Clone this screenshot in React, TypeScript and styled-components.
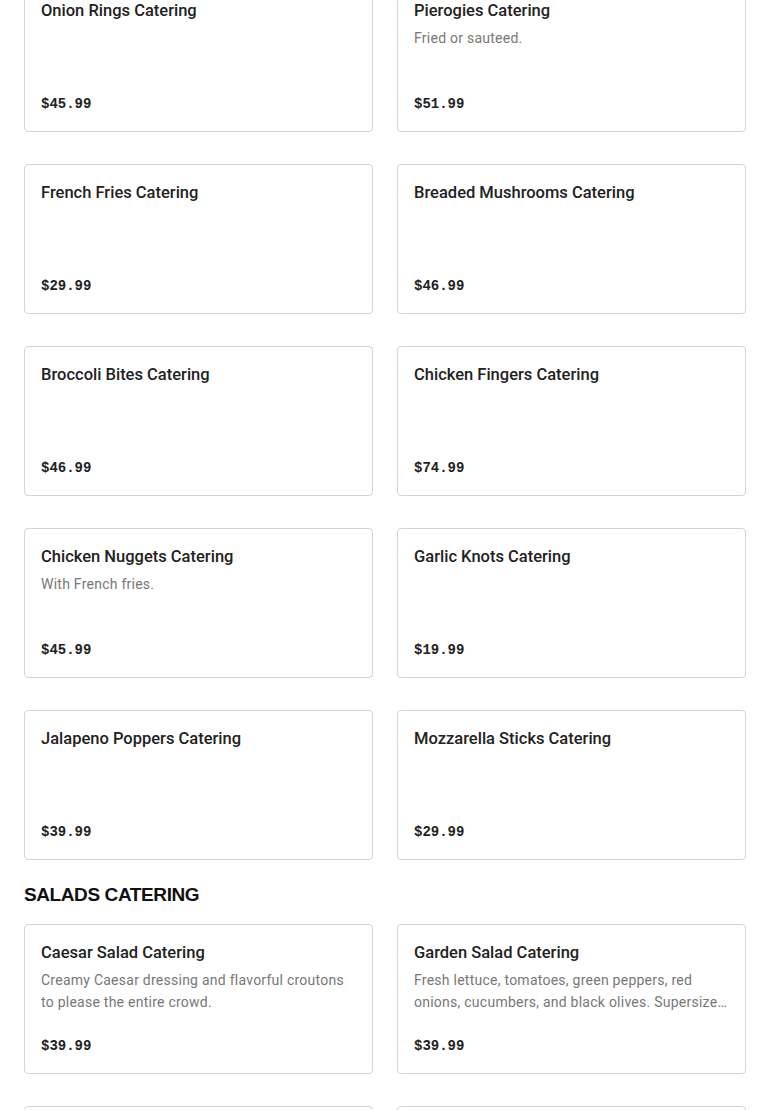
import React from "react";
import styled, { createGlobalStyle } from "styled-components";

const GlobalStyle = createGlobalStyle`
  * {
    box-sizing: border-box;
  }
  body {
    margin: 0;
    background: #fff;
    font-family: Roboto, "Liberation Sans", sans-serif;
    color: #222;
    overflow: hidden;
  }
`;

const Page = styled.div`
  padding: 0 24px;
  margin-top: -18px;
`;

const Grid = styled.div`
  display: grid;
  grid-template-columns: 1fr 1fr;
  column-gap: 24px;
  row-gap: 32px;
`;

const SectionTitle = styled.h2`
  margin: 23px 0 17px;
  font-family: "Liberation Sans", Arial, sans-serif;
  font-weight: 900;
  font-size: 19px;
  line-height: 24px;
  letter-spacing: -0.4px;
  text-transform: uppercase;
  color: #111;
`;

const Card = styled.div`
  height: 150px;
  border: 1px solid #d4d4d4;
  border-radius: 4px;
  padding: 17px 13px 16px 16px;
  display: flex;
  flex-direction: column;
  background: #fff;
`;

const Name = styled.div`
  font-size: 16.5px;
  font-weight: 500;
  line-height: 22px;
  color: #222;
`;

const Desc = styled.div`
  margin-top: 5px;
  font-size: 14px;
  line-height: 22px;
  letter-spacing: 0.25px;
  color: #777;
  display: -webkit-box;
  -webkit-line-clamp: 2;
  -webkit-box-orient: vertical;
  overflow: hidden;
`;

const Price = styled.div`
  margin-top: auto;
  font-family: "Liberation Mono", "DejaVu Sans Mono", monospace;
  font-weight: 700;
  font-size: 14px;
  line-height: 22px;
  color: #222;
`;

type Item = { name: string; desc?: string; price: string };

const sides: Item[] = [
  { name: "Onion Rings Catering", price: "$45.99" },
  { name: "Pierogies Catering", desc: "Fried or sauteed.", price: "$51.99" },
  { name: "French Fries Catering", price: "$29.99" },
  { name: "Breaded Mushrooms Catering", price: "$46.99" },
  { name: "Broccoli Bites Catering", price: "$46.99" },
  { name: "Chicken Fingers Catering", price: "$74.99" },
  { name: "Chicken Nuggets Catering", desc: "With French fries.", price: "$45.99" },
  { name: "Garlic Knots Catering", price: "$19.99" },
  { name: "Jalapeno Poppers Catering", price: "$39.99" },
  { name: "Mozzarella Sticks Catering", price: "$29.99" },
];

const salads: Item[] = [
  {
    name: "Caesar Salad Catering",
    desc: "Creamy Caesar dressing and flavorful croutons to please the entire crowd.",
    price: "$39.99",
  },
  {
    name: "Garden Salad Catering",
    desc: "Fresh lettuce, tomatoes, green peppers, red onions, cucumbers, and black olives. Supersize your salad with extra toppings.",
    price: "$39.99",
  },
  { name: "Greek Salad Catering", price: "$44.99" },
  { name: "Antipasto Salad Catering", price: "$49.99" },
];

const MenuCard = ({ item }: { item: Item }) => (
  <Card>
    <Name>{item.name}</Name>
    {item.desc && <Desc>{item.desc}</Desc>}
    <Price>{item.price}</Price>
  </Card>
);

const App = () => {
  return (
    <>
      <GlobalStyle />
      <Page>
        <Grid>
          {sides.map((it) => (
            <MenuCard key={it.name} item={it} />
          ))}
        </Grid>
        <SectionTitle>Salads Catering</SectionTitle>
        <Grid>
          {salads.map((it) => (
            <MenuCard key={it.name} item={it} />
          ))}
        </Grid>
      </Page>
    </>
  );
};

export default App;
